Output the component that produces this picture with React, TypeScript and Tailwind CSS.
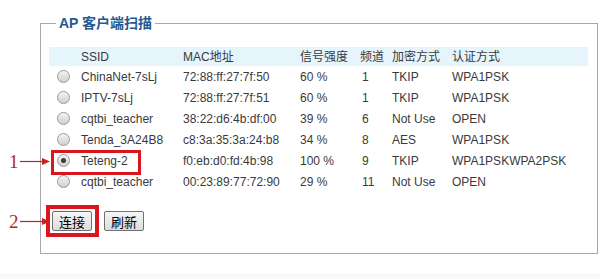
import React from 'react'

interface ApRow {
  ssid: string
  mac: string
  signal: string
  channel: string
  enc: string
  auth: string
  checked?: boolean
}

const rows: ApRow[] = [
  { ssid: 'ChinaNet-7sLj', mac: '72:88:ff:27:7f:50', signal: '60 %', channel: '1', enc: 'TKIP', auth: 'WPA1PSK' },
  { ssid: 'IPTV-7sLj', mac: '72:88:ff:27:7f:51', signal: '60 %', channel: '1', enc: 'TKIP', auth: 'WPA1PSK' },
  { ssid: 'cqtbi_teacher', mac: '38:22:d6:4b:df:00', signal: '39 %', channel: '6', enc: 'Not Use', auth: 'OPEN' },
  { ssid: 'Tenda_3A24B8', mac: 'c8:3a:35:3a:24:b8', signal: '34 %', channel: '8', enc: 'AES', auth: 'WPA1PSK' },
  { ssid: 'Teteng-2', mac: 'f0:eb:d0:fd:4b:98', signal: '100 %', channel: '9', enc: 'TKIP', auth: 'WPA1PSKWPA2PSK', checked: true },
  { ssid: 'cqtbi_teacher', mac: '00:23:89:77:72:90', signal: '29 %', channel: '11', enc: 'Not Use', auth: 'OPEN' },
]

function Radio({ checked }: { checked?: boolean }) {
  return (
    <span className="flex h-[13px] w-[13px] items-center justify-center rounded-full border border-[#9a9a9a] bg-gradient-to-b from-[#f4f4f4] to-[#cfcfcf]">
      {checked && <span className="h-[5px] w-[5px] rounded-full bg-[#3c3c3c]" />}
    </span>
  )
}

function Arrow({ label, top }: { label: string; top: number }) {
  // 标注：数字 + 红色箭头
  return (
    <div className="absolute left-[9px] flex items-center" style={{ top }}>
      <span className="font-['Liberation_Serif',serif] text-[19px] leading-none text-[#b0282c]">{label}</span>
      <svg width="30" height="9" viewBox="0 0 30 9" className="ml-[1px]">
        <line x1="0" y1="4.5" x2="24" y2="4.5" stroke="#b0282c" strokeWidth="1.2" />
        <polygon points="22,1 30,4.5 22,8" fill="#c81e24" />
      </svg>
    </div>
  )
}

export default function App() {
  const cell = 'h-[21px] p-0 text-left align-middle font-normal'
  return (
    <div className="relative h-[279px] w-[600px] bg-white font-['Liberation_Sans','Noto_Sans_CJK_SC',sans-serif] text-[12px] text-[#3a3a3a]">
      <div className="pl-[40px] pr-[2px] pt-[13px]">
        <fieldset className="h-[241px] border border-[#a8a8a8] pl-[8px] pr-[9px] pt-[14px]">
          <legend className="ml-[7px] px-[3px] text-[14px] font-bold leading-[20px] text-[#245a8f]">AP 客户端扫描</legend>
          <table className="w-full border-collapse">
            <thead>
              <tr className="bg-[#e6f4fc]">
                <th className="h-[19px] w-[32px] p-0" />
                <th className="h-[19px] w-[102px] p-0 text-left font-normal">SSID</th>
                <th className="h-[19px] w-[117px] p-0 text-left font-normal">MAC地址</th>
                <th className="h-[19px] w-[60px] p-0 text-left font-normal">信号强度</th>
                <th className="h-[19px] w-[32px] p-0 text-left font-normal">频道</th>
                <th className="h-[19px] w-[60px] p-0 text-left font-normal">加密方式</th>
                <th className="h-[19px] p-0 text-left font-normal">认证方式</th>
              </tr>
            </thead>
            <tbody>
              {rows.map((r, i) => (
                <tr key={i}>
                  <td className={cell}>
                    <div className="pl-[8px]">
                      <Radio checked={r.checked} />
                    </div>
                  </td>
                  <td className={cell}>{r.ssid}</td>
                  <td className={cell}>{r.mac}</td>
                  <td className={cell}>{r.signal}</td>
                  <td className={cell}>
                    <span className="pl-[2px]">{r.channel}</span>
                  </td>
                  <td className={cell}>{r.enc}</td>
                  <td className={cell}>{r.auth}</td>
                </tr>
              ))}
            </tbody>
          </table>
          <div className="mt-[19px] flex gap-[12px] pl-[3px]">
            <button className="h-[20px] w-[40px] rounded-[2px] border border-[#707070] bg-gradient-to-b from-[#f6f6f6] to-[#dcdcdc] font-['Noto_Sans_CJK_SC',sans-serif] text-[13px] leading-none text-black">
              连接
            </button>
            <button className="h-[20px] w-[40px] rounded-[2px] border border-[#707070] bg-gradient-to-b from-[#f6f6f6] to-[#dcdcdc] font-['Noto_Sans_CJK_SC',sans-serif] text-[13px] leading-none text-black">
              刷新
            </button>
          </div>
        </fieldset>
      </div>

      {/* 标注框 */}
      <div className="absolute left-[51px] top-[150px] h-[25px] w-[90px] border-[3px] border-[#d9161e]" />
      <div className="absolute left-[46px] top-[205px] h-[32px] w-[53px] border-[4px] border-[#d9161e]" />
      <Arrow label="1" top={152} />
      <Arrow label="2" top={212} />
      <div className="absolute bottom-0 left-0 h-[6px] w-full bg-[#fafafa]" />
    </div>
  )
}
